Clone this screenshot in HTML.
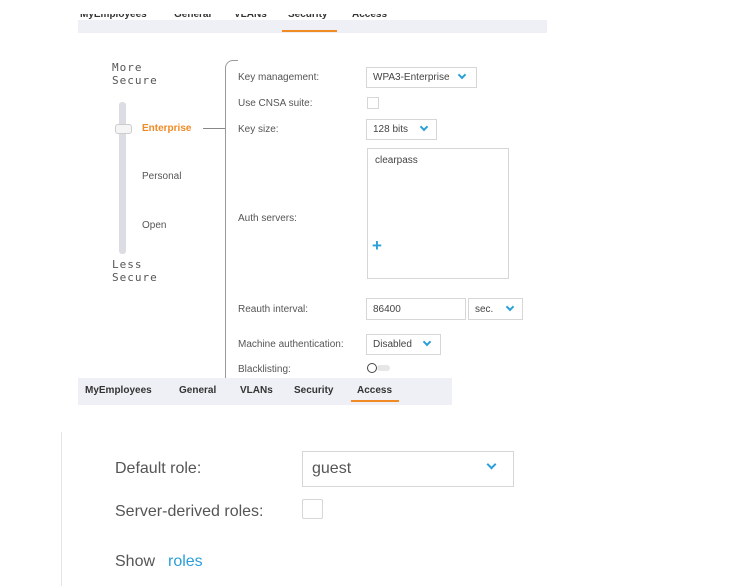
<!DOCTYPE html>
<html><head><style>
body{margin:0;width:747px;height:586px;background:#fff;position:relative;overflow:hidden;font-family:"Liberation Sans","DejaVu Sans",sans-serif;color:#444}
.a{position:absolute;white-space:nowrap}
.s{font-size:10px;color:#555}
.box{position:absolute;border:1px solid #d6d6d6;background:#fff;box-sizing:border-box}
.chev{position:absolute;width:4px;height:4px;border-right:2px solid #2a9fd8;border-bottom:2px solid #2a9fd8;transform:rotate(45deg)}
</style></head><body>
<div class="a" style="left:78px;top:20px;width:469px;height:13px;background:#eef0f5"></div>
<div class="a" style="left:80px;top:14px;font-size:10px;font-weight:bold;color:#333;height:8px;overflow:hidden;line-height:2px">MyEmployees</div>
<div class="a" style="left:174px;top:14px;font-size:10px;font-weight:bold;color:#333;height:8px;overflow:hidden;line-height:2px">General</div>
<div class="a" style="left:234px;top:14px;font-size:10px;font-weight:bold;color:#333;height:8px;overflow:hidden;line-height:2px">VLANs</div>
<div class="a" style="left:288px;top:14px;font-size:10px;font-weight:bold;color:#333;height:8px;overflow:hidden;line-height:2px">Security</div>
<div class="a" style="left:352px;top:14px;font-size:10px;font-weight:bold;color:#333;height:8px;overflow:hidden;line-height:2px">Access</div>
<div class="a" style="left:282px;top:30px;width:55px;height:2px;background:#f08a24"></div>

<div class="a" style="left:112px;top:61px;font-size:11px;letter-spacing:1px;line-height:13px;font-family:'DejaVu Sans Mono','Liberation Mono',monospace;color:#555">More<br>Secure</div>
<div class="a" style="left:119px;top:102px;width:7px;height:152px;background:#dcdde2;border-radius:3px"></div>
<div class="a" style="left:115px;top:124px;width:15px;height:8px;border:1px solid #ccc;border-radius:3px;background:#f5f5f5"></div>
<div class="a" style="left:142px;top:123px;font-size:10px;font-weight:bold;color:#f08a24">Enterprise</div>
<div class="a" style="left:203px;top:128px;width:22px;height:1px;background:#888"></div>
<div class="a s" style="left:142px;top:171px">Personal</div>
<div class="a s" style="left:142px;top:220px">Open</div>
<div class="a" style="left:112px;top:258px;font-size:11px;letter-spacing:1px;line-height:13px;font-family:'DejaVu Sans Mono','Liberation Mono',monospace;color:#555">Less<br>Secure</div>
<div class="a" style="left:225px;top:60px;width:12px;height:320px;border-left:1px solid #999;border-top:1px solid #999;border-top-left-radius:8px"></div>

<div class="a s" style="left:238px;top:72px">Key management:</div>
<div class="box" style="left:366px;top:67px;width:111px;height:21px"></div>
<div class="a s" style="left:373px;top:72px;color:#444">WPA3-Enterprise</div>
<div class="chev" style="left:459px;top:72px"></div>
<div class="a s" style="left:238px;top:98px">Use CNSA suite:</div>
<div class="box" style="left:367px;top:97px;width:12px;height:12px"></div>
<div class="a s" style="left:238px;top:124px">Key size:</div>
<div class="box" style="left:366px;top:119px;width:71px;height:21px"></div>
<div class="a s" style="left:373px;top:124px;color:#444">128 bits</div>
<div class="chev" style="left:421px;top:124px"></div>
<div class="box" style="left:367px;top:148px;width:142px;height:131px"></div>
<div class="a s" style="left:375px;top:155px;color:#444">clearpass</div>
<div class="a" style="left:372px;top:236px;font-size:17px;font-weight:bold;color:#2a9fd8">+</div>
<div class="a s" style="left:238px;top:213px">Auth servers:</div>
<div class="a s" style="left:238px;top:304px">Reauth interval:</div>
<div class="box" style="left:366px;top:298px;width:100px;height:22px"></div>
<div class="a s" style="left:373px;top:304px;color:#444">86400</div>
<div class="box" style="left:468px;top:298px;width:55px;height:22px"></div>
<div class="a s" style="left:475px;top:304px;color:#444">sec.</div>
<div class="chev" style="left:507px;top:304px"></div>
<div class="a s" style="left:238px;top:339px">Machine authentication:</div>
<div class="box" style="left:366px;top:334px;width:75px;height:21px"></div>
<div class="a s" style="left:373px;top:339px;color:#444">Disabled</div>
<div class="chev" style="left:424px;top:339px"></div>
<div class="a s" style="left:238px;top:364px">Blacklisting:</div>
<div class="a" style="left:367px;top:363px;width:8px;height:8px;border:1.5px solid #444;border-radius:50%"></div>
<div class="a" style="left:377px;top:365px;width:13px;height:6px;background:#e6e6e6;border-radius:3px"></div>

<div class="a" style="left:78px;top:378px;width:374px;height:27px;background:#eef0f5"></div>
<div class="a" style="left:85px;top:385px;font-size:10px;font-weight:bold;color:#333">MyEmployees</div>
<div class="a" style="left:179px;top:385px;font-size:10px;font-weight:bold;color:#333">General</div>
<div class="a" style="left:240px;top:385px;font-size:10px;font-weight:bold;color:#333">VLANs</div>
<div class="a" style="left:294px;top:385px;font-size:10px;font-weight:bold;color:#333">Security</div>
<div class="a" style="left:357px;top:385px;font-size:10px;font-weight:bold;color:#333">Access</div>
<div class="a" style="left:351px;top:400px;width:48px;height:2px;background:#f08a24"></div>

<div class="a" style="left:61px;top:432px;width:1px;height:154px;background:#e4e4e4"></div>
<div class="a" style="left:115px;top:460px;font-size:16px;color:#555">Default role:</div>
<div class="box" style="left:302px;top:451px;width:212px;height:36px"></div>
<div class="a" style="left:312px;top:460px;font-size:16px;color:#555">guest</div>
<div class="chev" style="left:488px;top:461px;width:5px;height:5px"></div>
<div class="a" style="left:115px;top:503px;font-size:16px;color:#555">Server-derived roles:</div>
<div class="box" style="left:302px;top:499px;width:21px;height:20px;border-radius:2px"></div>
<div class="a" style="left:115px;top:553px;font-size:16px;color:#555">Show</div>
<div class="a" style="left:168px;top:553px;font-size:16px;color:#2a9fd8">roles</div>
</body></html>
